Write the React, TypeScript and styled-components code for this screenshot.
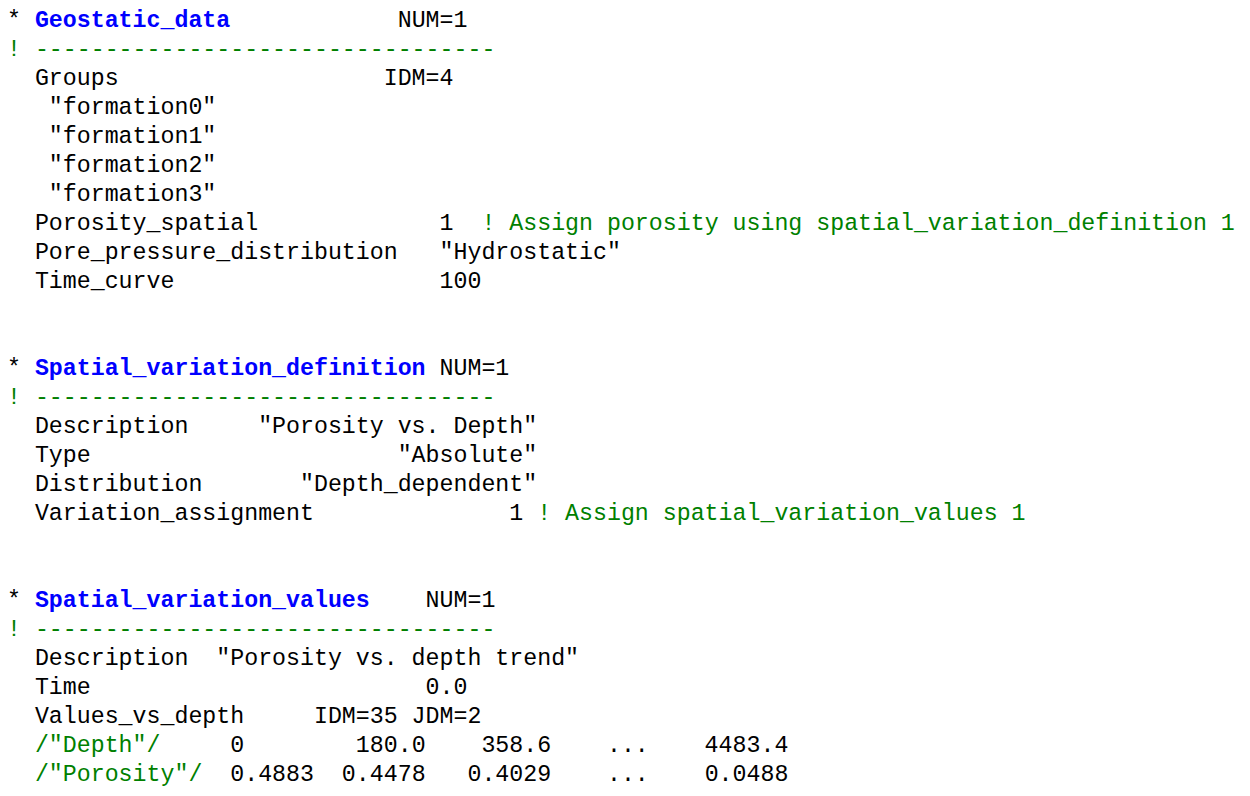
import styled, { createGlobalStyle } from "styled-components";

type Kind = "plain" | "keyword" | "comment";
type Segment = { text: string; kind?: Kind };
type Line = Segment[];

const GlobalStyle = createGlobalStyle`
  html, body {
    margin: 0;
    padding: 0;
    background: #ffffff;
  }
`;

// lays out pieces at fixed character columns, starting from column `from`
const at = (from: number, pieces: [number, string][]) => {
  let out = "";
  let col = from;
  for (const [c, text] of pieces) {
    out += " ".repeat(Math.max(c === from ? 0 : 1, c - col)) + text;
    col = Math.max(c, col) + text.length;
  }
  return out;
};

const field = (key: string, col: number, value: string) => at(0, [[2, key], [col, value]]);

const header = (name: string, gap: number, num: string): Line => [
  { text: "* " },
  { text: name, kind: "keyword" },
  { text: " ".repeat(gap) + num },
];

const rule: Line = [{ text: "! " + "-".repeat(33), kind: "comment" }];
const blank: Line = [{ text: "" }];

const LINES: Line[] = [
  header("Geostatic_data", 12, "NUM=1"),
  rule,
  [{ text: field("Groups", 27, "IDM=4") }],
  [{ text: '   "formation0"' }],
  [{ text: '   "formation1"' }],
  [{ text: '   "formation2"' }],
  [{ text: '   "formation3"' }],
  [
    { text: field("Porosity_spatial", 31, "1") + "  " },
    { text: "! Assign porosity using spatial_variation_definition 1", kind: "comment" },
  ],
  [{ text: field("Pore_pressure_distribution", 31, '"Hydrostatic"') }],
  [{ text: field("Time_curve", 31, "100") }],
  blank,
  blank,
  header("Spatial_variation_definition", 1, "NUM=1"),
  rule,
  [{ text: field("Description", 18, '"Porosity vs. Depth"') }],
  [{ text: field("Type", 28, '"Absolute"') }],
  [{ text: field("Distribution", 21, '"Depth_dependent"') }],
  [
    { text: field("Variation_assignment", 36, "1") + " " },
    { text: "! Assign spatial_variation_values 1", kind: "comment" },
  ],
  blank,
  blank,
  header("Spatial_variation_values", 4, "NUM=1"),
  rule,
  [{ text: field("Description", 15, '"Porosity vs. depth trend"') }],
  [{ text: field("Time", 30, "0.0") }],
  [{ text: at(0, [[2, "Values_vs_depth"], [22, "IDM=35"], [29, "JDM=2"]]) }],
  [
    { text: "  " },
    { text: '/"Depth"/', kind: "comment" },
    { text: at(11, [[16, "0"], [25, "180.0"], [34, "358.6"], [43, "..."], [50, "4483.4"]]) },
  ],
  [
    { text: "  " },
    { text: '/"Porosity"/', kind: "comment" },
    { text: at(14, [[16, "0.4883"], [24, "0.4478"], [33, "0.4029"], [43, "..."], [50, "0.0488"]]) },
  ],
];

export default function App() {
  return (
    <>
      <GlobalStyle />
      <Listing>
        {LINES.map((line, i) => (
          <Row key={i}>
            {line.map((seg, j) => (
              <Token key={j} $kind={seg.kind ?? "plain"}>
                {seg.text}
              </Token>
            ))}
          </Row>
        ))}
      </Listing>
    </>
  );
}

const Listing = styled.pre`
  margin: 0;
  padding: 7px 0 0 7px;
  font-family: "Liberation Mono", "Courier New", monospace;
  font-size: 23.25px;
  line-height: 29px;
  color: #000000;
`;

const Row = styled.div`
  height: 29px;
  white-space: pre;
`;

const Token = styled.span<{ $kind: Kind }>`
  color: ${({ $kind }) =>
    $kind === "keyword" ? "#0000ff" : $kind === "comment" ? "#008000" : "#000000"};
  font-weight: ${({ $kind }) => ($kind === "keyword" ? 700 : 400)};
`;
